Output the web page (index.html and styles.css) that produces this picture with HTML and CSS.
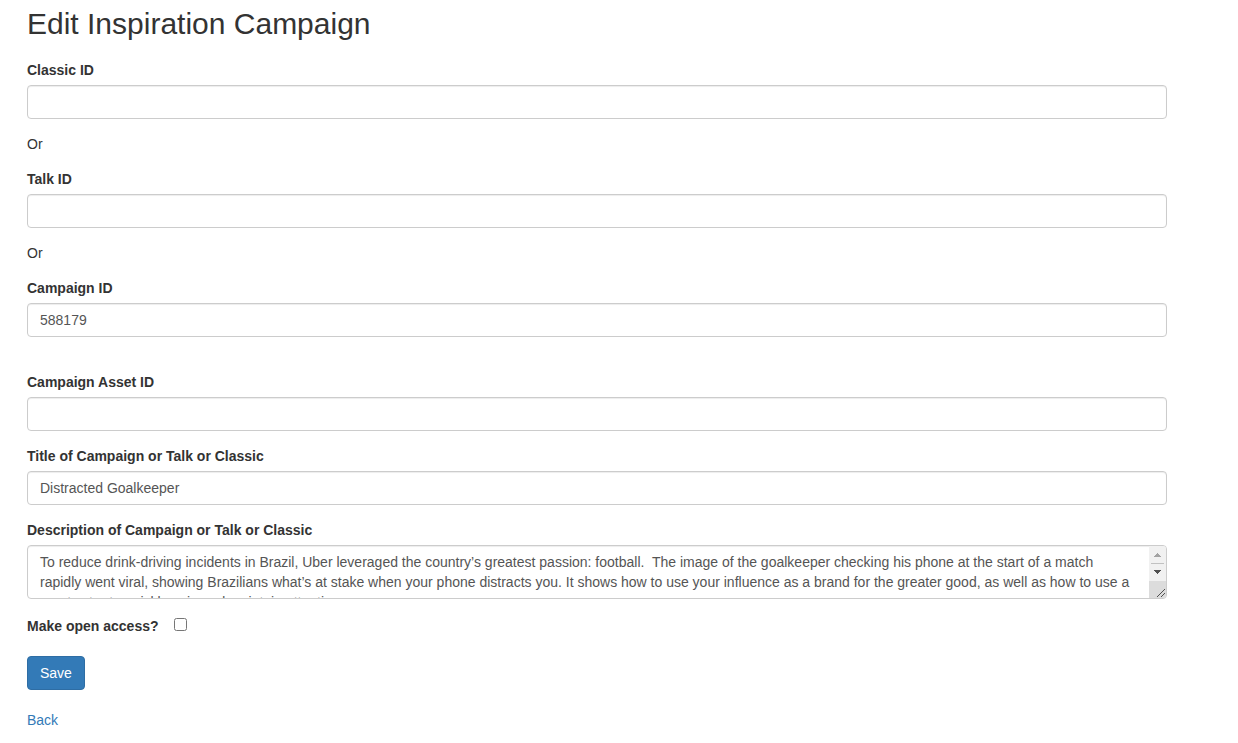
FILE: index.html
```html
<!DOCTYPE html>
<html lang="en">
<head>
<meta charset="utf-8">
<title>Edit Inspiration Campaign</title>
<link rel="stylesheet" href="styles.css">
</head>
<body>
<main class="container">
<h1 class="title">Edit Inspiration Campaign</h1>
<form>
<div class="form-group"><label for="classic">Classic ID</label><input class="form-control" id="classic" type="text"></div>
<p class="or">Or</p>
<div class="form-group"><label for="talk">Talk ID</label><input class="form-control" id="talk" type="text"></div>
<p class="or">Or</p>
<div class="form-group spaced"><label for="campaign">Campaign ID</label><input class="form-control" id="campaign" type="text" value="588179"></div>
<div class="form-group"><label for="asset">Campaign Asset ID</label><input class="form-control" id="asset" type="text"></div>
<div class="form-group"><label for="name">Title of Campaign or Talk or Classic</label><input class="form-control" id="name" type="text" value="Distracted Goalkeeper"></div>
<div class="form-group">
<label for="description">Description of Campaign or Talk or Classic</label>
<div class="area">
<textarea class="form-control description" id="description" rows="2">To reduce drink-driving incidents in Brazil, Uber leveraged the country’s greatest passion: football.  The image of the goalkeeper checking his phone at the start of a match rapidly went viral, showing Brazilians what’s at stake when your phone distracts you. It shows how to use your influence as a brand for the greater good, as well as how to use a sports star to quickly gain and maintain attention.</textarea>
<svg class="scrollbar" width="17" height="52" viewBox="0 0 17 52" aria-hidden="true" shape-rendering="crispEdges">
<path fill="#f1f1f1" d="M0 0h17v35H0z"/>
<path fill="#dcdcdc" d="M0 35h17v17H0z"/>
<path fill="#c1c1c1" d="M2 17h13v1H2z"/>
<path fill="#a3a3a3" d="M8 7h1v1h1v1h1v1h1v1H5v-1h1V9h1V8h1z"/>
<path fill="#505050" d="M5 24h7v1h-1v1h-1v1H9v1H8v-1H7v-1H6v-1H5z"/>
<path d="M8 51l8-8M12 51l4-4" stroke="#505050" fill="none" shape-rendering="auto"/>
</svg>
</div>
</div>
<div class="check-row"><label for="open">Make open access?</label><input id="open" type="checkbox"></div>
<button class="save" type="submit">Save</button>
</form>
<a class="back" href="#">Back</a>
</main>
</body>
</html>
```

FILE: styles.css
```css
* { box-sizing: border-box; }
body {
  margin: 0;
  font: 14px/20px "Liberation Sans", Arial, sans-serif;
  color: #333;
  background: #fff;
}
.container { padding: 7px 71px 13px 27px; }
.title { margin: 0 0 20px; font-size: 30px; line-height: 33px; font-weight: 400; }
.form-group { margin-bottom: 15px; }
.spaced { margin-bottom: 35px; }
label { display: block; margin-bottom: 5px; font-weight: 700; }
.form-control {
  display: block;
  width: 100%;
  height: 34px;
  padding: 6px 12px;
  font: inherit;
  color: #555;
  background: #fff;
  border: 1px solid #ccc;
  border-radius: 4px;
  box-shadow: inset 0 1px 1px rgba(0, 0, 0, .075);
}
.area { position: relative; }
.description {
  height: 54px;
  padding-right: 29px;
  overflow: auto;
  resize: none;
  scrollbar-width: none;
}
.scrollbar {
  position: absolute;
  top: 1px;
  right: 1px;
  border-radius: 0 3px 3px 0;
  pointer-events: none;
}
.or { margin: 0 0 15px; }
.check-row { display: flex; gap: 15px; margin-bottom: 15px; }
.check-row label { margin-top: 2px; }
.check-row input { width: 13px; height: 13px; margin: 4px 0 0; }
.save {
  display: block;
  height: 34px;
  margin-bottom: 20px;
  padding: 6px 12px;
  font: inherit;
  color: #fff;
  background: #337ab7;
  border: 1px solid #2e6da4;
  border-radius: 4px;
}
.back { color: #337ab7; text-decoration: none; }
```
